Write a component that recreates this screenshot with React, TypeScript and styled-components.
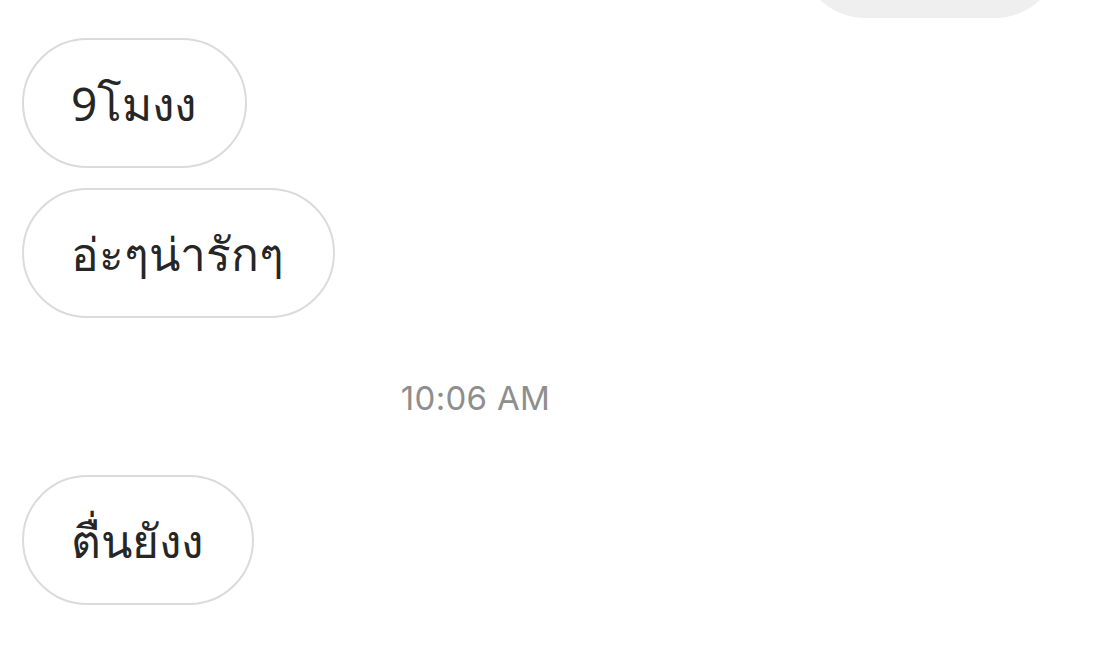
import React from "react";
import styled, { createGlobalStyle } from "styled-components";

const Global = createGlobalStyle`
  html, body { margin: 0; padding: 0; background: #ffffff; }
  body { font-family: "Noto Sans", "DejaVu Sans", sans-serif; }
`;

const Thread = styled.div`
  width: 1095px;
  height: 663px;
  overflow: hidden;
  display: flex;
  flex-direction: column;
  padding: 0 22px;
  box-sizing: border-box;
`;

const Row = styled.div<{ $mine?: boolean; $gap?: number }>`
  display: flex;
  justify-content: ${(p) => (p.$mine ? "flex-end" : "flex-start")};
  margin-top: ${(p) => p.$gap ?? 20}px;
`;

const SentBubble = styled.div`
  width: 260px;
  height: 130px;
  margin-top: -112px;
  margin-right: 13px;
  border-radius: 65px;
  background: #efefef;
`;

const Bubble = styled.div`
  box-sizing: border-box;
  height: 130px;
  padding: 0 49px 0 47px;
  display: flex;
  align-items: center;
  border: 2px solid #dbdbdb;
  border-radius: 65px;
  background: #ffffff;
  color: #262626;
  font-size: 46px;
  line-height: 1;
  white-space: nowrap;
`;

const Stamp = styled.div`
  align-self: center;
  margin-top: 60px;
  margin-left: -144px;
  font-family: "Inter", "Noto Sans", sans-serif;
  font-size: 33px;
  color: #8e8e8e;
  letter-spacing: 0.3px;
`;

export default function App() {
  return (
    <>
      <Global />
      <Thread>
        <Row $mine $gap={0}>
          <SentBubble />
        </Row>
        <Row>
          <Bubble>9โมงง</Bubble>
        </Row>
        <Row>
          <Bubble>อ่ะๆน่ารักๆ</Bubble>
        </Row>
        <Stamp>10:06 AM</Stamp>
        <Row $gap={57}>
          <Bubble>ตื่นยังง</Bubble>
        </Row>
      </Thread>
    </>
  );
}
